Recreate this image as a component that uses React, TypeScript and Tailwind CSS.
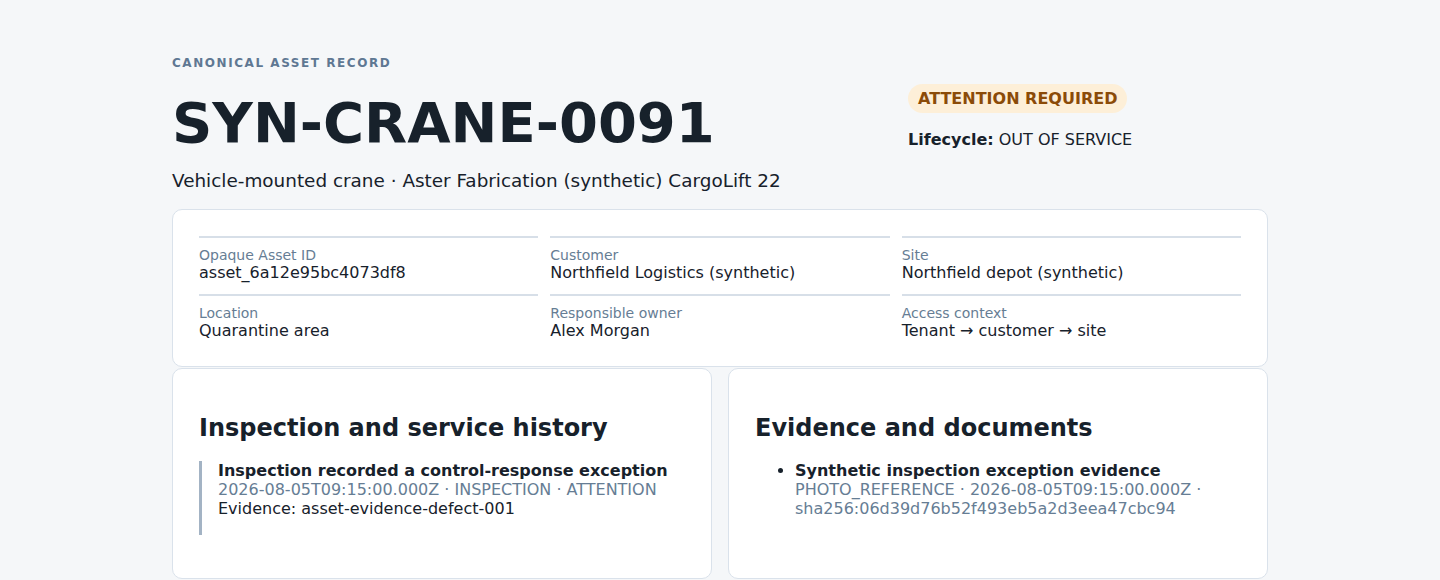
import React from "react";

const fields = [
  { label: "Opaque Asset ID", value: "asset_6a12e95bc4073df8" },
  { label: "Customer", value: "Northfield Logistics (synthetic)" },
  { label: "Site", value: "Northfield depot (synthetic)" },
  { label: "Location", value: "Quarantine area" },
  { label: "Responsible owner", value: "Alex Morgan" },
  { label: "Access context", value: "Tenant → customer → site" },
];

export default function App() {
  return (
    <div
      className="min-h-[580px] bg-[#f5f7f9] text-[#17212b]"
      style={{ fontFamily: '"DejaVu Sans", sans-serif' }}
    >
      <div className="mx-auto w-[1096px] pt-[56px]">
        <header className="grid grid-cols-[2fr_1fr] gap-4">
          <div>
            <p className="text-[12px] font-bold uppercase tracking-[0.13em] leading-[15px] text-[#5f7893]">
              Canonical asset record
            </p>
            <h1 className="mt-[18px] text-[56px] font-bold leading-[68px] text-[#17212b]">
              SYN-CRANE-0091
            </h1>
            <p className="mt-[13px] text-[18.4px] leading-[22px] text-[#17212b]">
              Vehicle-mounted crane · Aster Fabrication (synthetic) CargoLift 22
            </p>
          </div>
          <div className="pt-[28px]">
            <span className="inline-block rounded-full bg-[#fdefd8] px-[10px] py-[5px] text-[16px] font-bold leading-[19px] text-[#8b4b08]">
              ATTENTION REQUIRED
            </span>
            <p className="mt-[17px] text-[16px] leading-[19px]">
              <strong>Lifecycle:</strong> OUT OF SERVICE
            </p>
          </div>
        </header>

        <section className="mt-[17px] rounded-[10px] border border-[#dae2eb] bg-white px-[26px] pb-[26px] pt-[26px]">
          <dl className="grid grid-cols-3 gap-x-3 gap-y-3">
            {fields.map((f) => (
              <div key={f.label} className="border-t-2 border-[#d7dfe8] pt-[9px]">
                <dt className="text-[14px] leading-[16px] text-[#667d94]">{f.label}</dt>
                <dd className="text-[16px] leading-[19px] text-[#17212b]">{f.value}</dd>
              </div>
            ))}
          </dl>
        </section>

        <div className="mt-[1px] grid grid-cols-2 gap-4">
          <section className="h-[211px] rounded-[10px] border border-[#dae2eb] bg-white px-[26px] pt-[45px]">
            <h2 className="text-[24px] font-bold leading-[29px]">Inspection and service history</h2>
            <div className="mt-[18px] border-l-[3px] border-[#a3b3c4] pb-[17px] pl-[16px]">
              <p className="text-[16px] font-bold leading-[19px]">
                Inspection recorded a control-response exception
              </p>
              <p className="text-[16px] leading-[19px] text-[#667d94]">
                2026-08-05T09:15:00.000Z · INSPECTION · ATTENTION
              </p>
              <p className="text-[16px] leading-[19px]">Evidence: asset-evidence-defect-001</p>
            </div>
          </section>
          <section className="h-[211px] rounded-[10px] border border-[#dae2eb] bg-white px-[26px] pt-[45px]">
            <h2 className="text-[24px] font-bold leading-[29px]">Evidence and documents</h2>
            <ul className="mt-[18px] list-disc pl-[40px]">
              <li className="text-[16px] leading-[19px]">
                <strong>Synthetic inspection exception evidence</strong>
                <br />
                <span className="text-[#667d94]">
                  PHOTO_REFERENCE · 2026-08-05T09:15:00.000Z · sha256:06d39d76b52f493eb5a2d3eea47cbc94
                </span>
              </li>
            </ul>
          </section>
        </div>
      </div>
    </div>
  );
}
